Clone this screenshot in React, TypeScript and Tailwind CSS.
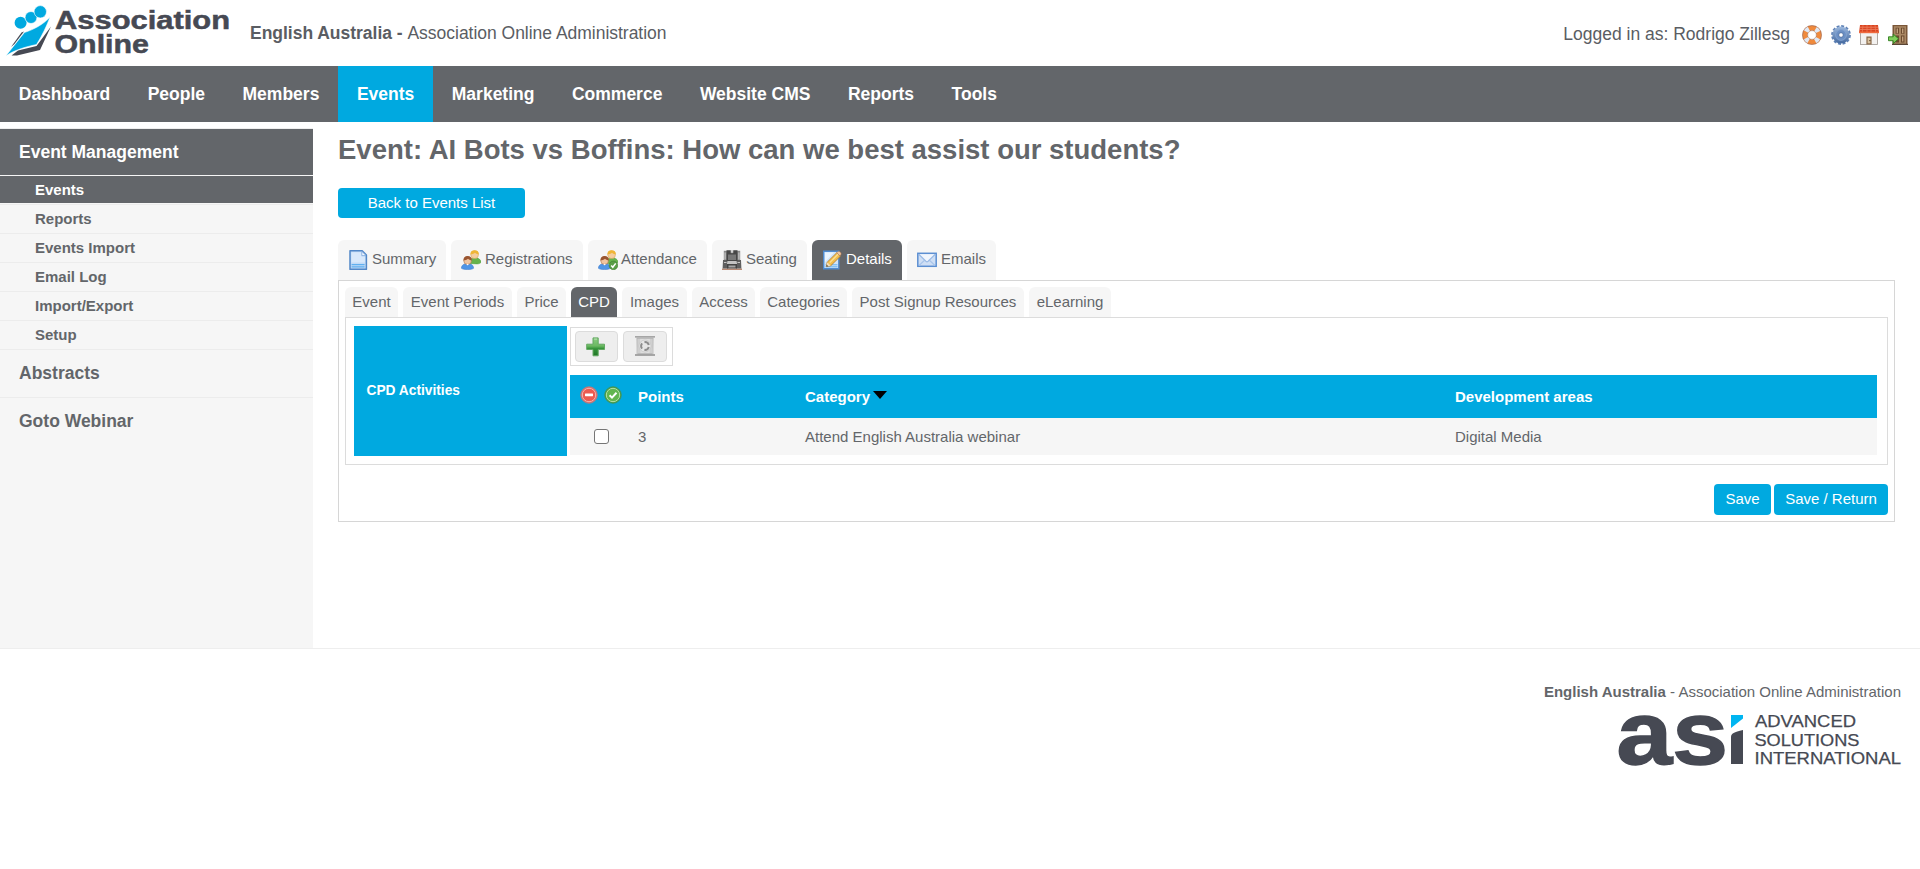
import React from "react";

const LifeRing = () => (
  <svg width="20" height="20" viewBox="0 0 20 20">
    <circle cx="10" cy="10" r="7" fill="none" stroke="#c96a2e" strokeWidth="5.6" />
    <circle cx="10" cy="10" r="7" fill="none" stroke="#f08a3c" strokeWidth="4.2" />
    <circle cx="10" cy="10" r="7" fill="none" stroke="#dfe8f5" strokeWidth="5.2" strokeDasharray="4 7" strokeDashoffset="-3.5" />
    <circle cx="10" cy="10" r="9.5" fill="none" stroke="#b08a78" strokeWidth=".6" />
    <circle cx="10" cy="10" r="4.3" fill="#fff" stroke="#b9a091" strokeWidth=".6" />
  </svg>
);

const Gear = () => (
  <svg width="20" height="20" viewBox="0 0 20 20">
    <defs>
      <linearGradient id="gear" x1="0" y1="0" x2="0" y2="1">
        <stop offset="0" stopColor="#9db9de" />
        <stop offset="1" stopColor="#44699f" />
      </linearGradient>
    </defs>
    <circle cx="10" cy="10" r="8.8" fill="none" stroke="#5f82b6" strokeWidth="2.2" strokeDasharray="2.9 1.7" />
    <circle cx="10" cy="10" r="8.6" fill="url(#gear)" />
    <circle cx="10" cy="10" r="5.4" fill="#6c90c4" stroke="#86a6d3" strokeWidth=".8" />
    <circle cx="10" cy="10" r="2.3" fill="#fff" stroke="#3c5f93" strokeWidth=".7" />
  </svg>
);

const Shop = () => (
  <svg width="20" height="20" viewBox="0 0 20 20">
    <rect x="1.5" y="7" width="17" height="12.5" fill="#f3f1ef" stroke="#9c948e" strokeWidth=".8" />
    <path d="M1 0h18l1 8H0z" fill="#d9431f" />
    <path d="M1 2.2h18M.6 4.4h18.8" stroke="#f6a184" strokeWidth=".6" />
    <path d="M4 0 3.3 7M8 0v7M12 0v7M16 0l.7 7" stroke="#f27d57" strokeWidth=".7" />
    <path d="M0 7.4h20" stroke="#f06a3e" strokeWidth="1.6" />
    <rect x="7.4" y="11.5" width="5.2" height="8" fill="#8a6b4c" />
    <rect x="8.6" y="12.8" width="2.8" height="5.5" fill="#d9c3a0" />
    <circle cx="10.9" cy="15.6" r=".7" fill="#4c3620" />
  </svg>
);

const Door = () => (
  <svg width="20" height="20" viewBox="0 0 20 20">
    <rect x="4.5" y="0" width="15" height="19.5" fill="#7a5638" />
    <rect x="6" y="1.2" width="12" height="17.6" fill="#a98763" />
    <path d="M7.6 2.8h3.4v6H7.6zM13 2.8h3.4v6H13zM7.6 10.4h3.4v7H7.6zM13 10.4h3.4v7H13z" fill="#6b492d" />
    <path d="M8.6 3.6h1.4v4.6H8.6zM14 3.6h1.4v4.6H14zM14 11.4h1.4v5H14z" fill="#c2a17c" />
    <path d="M4 19.4h16" stroke="#5a4636" strokeWidth="1.2" />
    <path d="M.5 11.8h4.7V9l5.4 4.8-5.4 4.8v-2.9H.5z" fill="#7fce5a" stroke="#2f7d1d" strokeWidth=".9" />
  </svg>
);

const PageIcon = () => (
  <svg width="20" height="20" viewBox="0 0 20 20">
    <path d="M2 .8h12.2l4.2 4.2v14.3H2z" fill="#c3dbf6" stroke="#5288c8" strokeWidth="1.5" strokeLinejoin="round" />
    <path d="M3.4 2.3h10v4.2h3.5v6H3.4z" fill="#d9e9fb" />
    <path d="M13.8 1.4v4.2H18z" fill="#f4f9ff" stroke="#7faade" strokeWidth=".8" />
    <path d="M3.6 14.6h13M3.6 16.9h13" stroke="#5fb0f0" strokeWidth="1.2" />
  </svg>
);

const PeopleIcon = ({ checked = false }: { checked?: boolean }) => (
  <svg width="20" height="20" viewBox="0 0 20 20">
    <path d="M8.500 13.500c-.3-4 2-5.700 5.500-5.700s6 2 6 4.300c0 1.200-2 1.800-4 1.800z" fill="#66b34c" stroke="#4d9a38" strokeWidth=".5" />
    <circle cx="13.600" cy="4.700" r="3.900" fill="#f4cd9e" stroke="#d5a050" strokeWidth=".5" />
    <path d="M9.400 4.600C9.200 1.500 11 .2 13.600.2s4.500 1.500 4.200 4.200C16 4.400 14.500 3.400 14 2.700 12.700 3.700 11 4.300 9.400 4.600z" fill="#efb536" />
    <path d="M.4 18.300c0-3.300 2.600-4.600 6.100-4.600s6.100 1.300 6.100 4.600c-2 1.700-10.200 1.700-12.200 0z" fill="#4f95e6" stroke="#3673c4" strokeWidth=".5" />
    <circle cx="6.600" cy="10.600" r="3.900" fill="#f0c5a0" stroke="#a0653c" strokeWidth=".5" />
    <path d="M2.500 10.600C2.200 7.500 4 5.900 6.600 5.900s4.500 1.500 4.200 4.500C9 10.400 7.600 9.400 7 8.700 5.800 9.700 4 10.300 2.500 10.600z" fill="#9a5530" />
    <path d="m5.300 14.100 1.300 1.400 1.300-1.400z" fill="#fff" />
    {checked && (
      <>
        <circle cx="15.400" cy="15.400" r="4.300" fill="#5a9e47" stroke="#3f7f32" strokeWidth=".6" />
        <path d="m13.200 15.500 1.600 1.800 2.900-3.900" fill="none" stroke="#fff" strokeWidth="1.500" />
      </>
    )}
  </svg>
);

const SeatIcon = () => (
  <svg width="20" height="20" viewBox="0 0 20 20">
    <path d="M0 18.500h20V20H0z" fill="#b98a74" />
    <path d="M1.800.8h16.400v10H1.800z" fill="#8a8a8a" />
    <path d="M1 10h5v8.500H.6zM14 10h5l.4 8.500H14z" fill="#5e5e5e" />
    <path d="M4.500.3h4.300v3h2.400v-3h4.300V11h-11z" fill="#474747" />
    <path d="M8.800.3h2.400v2.400H8.800z" fill="#d0d0d0" />
    <path d="M6 4.500h8V10H6z" fill="#777" />
    <path d="M5.500 11h9l.6 3H4.900z" fill="#c3c3c3" />
    <path d="M5 14h10v4.500H5z" fill="#444" />
    <path d="M6.500 15.500h7v2h-7z" fill="#a6a6a6" />
    <path d="M2.500 2.500h1.200v7H2.500zM16.300 2.500h1.200v7h-1.200zM2 12h2.500v1H2zM15.500 12H18v1h-2.500z" fill="#c5c5c5" />
  </svg>
);

const EditIcon = () => (
  <svg width="20" height="20" viewBox="0 0 20 20">
    <path d="M1.700 1.200h15.100v17.600H1.700z" fill="#cfe4fb" stroke="#4f8bd0" strokeWidth="1.400" />
    <path d="M3 2.500h9L3 12z" fill="#e9f4ff" />
    <path d="M3.500 14.800h12M3.500 16.800h12" stroke="#62b3f2" strokeWidth="1" />
    <path d="m5.200 12.200 9.600-9.500 3.600 3.500-9.600 9.500-4.500.9z" fill="#f2bf4f" stroke="#b0782a" strokeWidth=".8" />
    <path d="m7.800 12.600 8.400-8.400" stroke="#fbe3a0" strokeWidth="1.200" />
    <path d="m14.800 2.700.8-.8c.8-.7 2-.5 2.800.3s1 2 .3 2.700l-.8.900z" fill="#f0c9a4" stroke="#b77b52" strokeWidth=".6" />
    <path d="m5.200 12.200-.9 4.400 4.500-.9z" fill="#f4dcb4" />
    <path d="m4.700 14.700-.4 1.900 2-.4z" fill="#333" />
  </svg>
);

const MailIcon = () => (
  <svg width="20" height="20" viewBox="0 0 20 20">
    <rect x=".8" y="3.300" width="18.400" height="13" fill="#cfdff5" stroke="#5c8fd2" strokeWidth="1.500" />
    <path d="m2 4.200 8 8 8-8z" fill="#f1f6fd" />
    <path d="m2 15.500 5.600-5.200M18 15.500l-5.600-5.200" stroke="#a9c5ea" strokeWidth="1.200" />
    <path d="m1.800 4.300 7.100 7c.7.600 1.500.600 2.200 0l7.100-7" fill="none" stroke="#9bbbe6" strokeWidth="1.200" />
  </svg>
);

const PlusIcon = () => (
  <svg width="20" height="20" viewBox="0 0 20 20">
    <defs>
      <linearGradient id="plus" x1="0" y1="0" x2="0" y2="1">
        <stop offset="0" stopColor="#8acb80" />
        <stop offset=".45" stopColor="#6bb962" />
        <stop offset=".6" stopColor="#35933a" />
        <stop offset="1" stopColor="#1f7526" />
      </linearGradient>
    </defs>
    <path d="M7 .9h5.200v6.300h6.300v5.300h-6.300v6.300H7v-6.300H.7V7.200H7z" fill="url(#plus)" stroke="#63a862" strokeWidth="1" strokeLinejoin="round" />
    <path d="M8.100 2.100h3" stroke="#b9e2b4" strokeWidth="1" />
  </svg>
);

const BinIcon = () => (
  <svg width="20" height="20" viewBox="0 0 20 20">
    <path d="M1.500 1.500h17l-.9 17H2.400z" fill="#cfcfcf" />
    <path d="M5 1.500h10l-.5 17h-9z" fill="#dedede" />
    <path d="M0 .9h20M0 19h20" stroke="#8f8f8f" strokeWidth="1.400" />
    <path d="M2 2.500h16M2.500 17.500h15" stroke="#b5b5b5" strokeWidth=".8" />
    <path d="M2 2v16M18 2v16" stroke="#b8b8b8" strokeWidth=".8" />
    <circle cx="10" cy="10" r="6" fill="#e6e6e6" stroke="#c0c0c0" strokeWidth=".6" />
    <circle cx="10" cy="10" r="3.900" fill="none" stroke="#8c8c8c" strokeWidth="2" strokeDasharray="5.600 2.570" strokeDashoffset="-1" />
  </svg>
);

const NoneIcon = () => (
  <svg width="18" height="18" viewBox="0 0 18 18">
    <circle cx="9" cy="9" r="8.300" fill="#e0706b" stroke="#b9787e" strokeWidth=".8" />
    <circle cx="9" cy="9" r="6.700" fill="#ec5b50" stroke="#f5b0a9" strokeWidth="1" />
    <rect x="5" y="7.600" width="8" height="2.600" rx=".4" fill="#fff" />
  </svg>
);

const AllIcon = () => (
  <svg width="18" height="18" viewBox="0 0 18 18">
    <circle cx="9" cy="9" r="8.300" fill="#4ba03f" stroke="#3f9160" strokeWidth=".8" />
    <circle cx="9" cy="9" r="6.700" fill="#62b550" stroke="#b4dfa9" strokeWidth="1" />
    <path d="m5.600 9.200 2.400 2.400 4.500-4.800" fill="none" stroke="#fff" strokeWidth="2" />
  </svg>
);

const Logo = () => (
  <svg width="236" height="66" viewBox="0 0 236 66" className="shrink-0 overflow-visible">
    <path d="M21.500 32.500 24 31.500 14.500 44 11 47z" fill="#464953" />
    <path d="M51 26.500 40 50 17 55.500H11.500L18 50.500 36.500 46z" fill="#464953" />
    <path d="M6 55.700 24.500 32.500C34 29.500 43 24.500 50 17.300 46.500 26 42 36 36.500 44.500 27 46.500 15.500 49.500 6 55.700z" fill="#00a9e0" stroke="#fff" strokeWidth=".5" />
    <circle cx="20.600" cy="22.800" r="6" fill="#00a9e0" />
    <circle cx="31" cy="17.500" r="6" fill="#00a9e0" stroke="#fff" strokeWidth=".7" />
    <circle cx="40.300" cy="11.800" r="6.200" fill="#00a9e0" stroke="#fff" strokeWidth=".6" />
    <g fill="#464953" stroke="#464953" strokeWidth=".5" fontFamily="Liberation Sans, Arial, sans-serif" fontWeight="700" fontSize="25">
      <text x="55" y="29.300" textLength="175" lengthAdjust="spacingAndGlyphs">Association</text>
      <text x="54.500" y="52.800" textLength="94.500" lengthAdjust="spacingAndGlyphs">Online</text>
    </g>
  </svg>
);

const AsiLogo = () => (
  <svg width="283" height="52" viewBox="0 0 283 52" className="block overflow-visible">
    <g fill="#464953" fontFamily="Liberation Sans, Arial, sans-serif">
      <text x="-1.500" y="48.500" fontSize="89" fontWeight="700" stroke="#464953" strokeWidth="1.500" textLength="111.500" lengthAdjust="spacingAndGlyphs">as</text>
      <path d="M113 49V22c0-3.500 3-5 12-7v34z" />
      <path d="M113 0h12v3.500L113 13z" fill="#00b5f1" />
      <g fontSize="16.500" stroke="#464953" strokeWidth=".25">
        <text x="137" y="12.200" textLength="101" lengthAdjust="spacingAndGlyphs">ADVANCED</text>
        <text x="136.500" y="30.800" textLength="105" lengthAdjust="spacingAndGlyphs">SOLUTIONS</text>
        <text x="136.500" y="49.300" textLength="146.500" lengthAdjust="spacingAndGlyphs">INTERNATIONAL</text>
      </g>
    </g>
  </svg>
);

const navItems = ["Dashboard", "People", "Members", "Events", "Marketing", "Commerce", "Website CMS", "Reports", "Tools"];
const subItems = ["Reports", "Events Import", "Email Log", "Import/Export", "Setup"];

const tabs = [
  { label: "Summary", icon: <PageIcon />, width: "w-[108px]", gap: "gap-[4px]" },
  { label: "Registrations", icon: <PeopleIcon />, width: "w-[132px]", gap: "gap-[4px]" },
  { label: "Attendance", icon: <PeopleIcon checked />, width: "w-[119px]", gap: "gap-[3px]" },
  { label: "Seating", icon: <SeatIcon />, width: "w-[95px]", gap: "gap-[4px]" },
  { label: "Details", icon: <EditIcon />, width: "w-[90px]", gap: "gap-[4px]", active: true },
  { label: "Emails", icon: <MailIcon />, width: "w-[89px]", gap: "gap-[4px]" },
];

const subTabs = [
  { label: "Event", width: "w-[53px]" },
  { label: "Event Periods", width: "w-[109px]" },
  { label: "Price", width: "w-[49px]" },
  { label: "CPD", width: "w-[46px]", active: true },
  { label: "Images", width: "w-[65px]" },
  { label: "Access", width: "w-[63px]" },
  { label: "Categories", width: "w-[87px]" },
  { label: "Post Signup Resources", width: "w-[172px]" },
  { label: "eLearning", width: "w-[82px]" },
];

export default function App() {
  return (
    <div className="h-[869px] w-full overflow-hidden bg-white font-['Liberation_Sans',Arial,sans-serif] text-[15px] text-[#63666a]">
      <header className="flex h-[66px] items-center">
        <Logo />
        <div className="ml-[14px] text-[17.5px] tracking-[-0.02px] whitespace-pre text-[#5a5d63]">
          <b>English Australia - </b>Association Online Administration
        </div>
        <div className="mt-[3px] mr-[12px] ml-auto flex items-center">
          <span className="mr-[12px] text-[17.5px] text-[#5a5d63]">Logged in as: Rodrigo Zillesg</span>
          <div className="flex gap-[8.7px]">
            <LifeRing />
            <Gear />
            <Shop />
            <Door />
          </div>
        </div>
      </header>

      <nav className="flex h-[56px] bg-[#63666a] text-[17.5px] font-bold text-white">
        {navItems.map((n) => (
          <a key={n} className={n === "Events" ? "flex items-center bg-[#00a9e0] px-[18.75px]" : "flex items-center px-[18.75px]"}>
            {n}
          </a>
        ))}
      </nav>

      <div className="flex h-[526px]">
        <aside className="mt-[6px] w-[313px] shrink-0 border-t border-[#eee] bg-[#f6f6f6] font-bold">
          <div className="flex h-[46px] items-center bg-[#63666a] pl-[19px] text-[17.5px] text-white">Event Management</div>
          <div className="mt-px flex h-[27px] items-center bg-[#63666a] pt-px pl-[35px] text-white">Events</div>
          <div className="h-[2px] border-b border-[#ececec]" />
          {subItems.map((s) => (
            <div key={s} className="flex h-[29px] items-center border-b border-[#ececec] pl-[35px]">
              {s}
            </div>
          ))}
          <div className="flex h-[48px] items-center border-b border-[#ececec] pl-[19px] text-[17.5px]">Abstracts</div>
          <div className="flex h-[46px] items-center pl-[19px] text-[17.5px]">Goto Webinar</div>
        </aside>

        <main className="ml-[25px] w-[1557px]">
          <h1 className="mt-[12px] text-[27.5px] leading-[32px] font-bold">Event: AI Bots vs Boffins: How can we best assist our students?</h1>
          <button className="mt-[22px] flex h-[30px] w-[187px] items-center justify-center rounded-[4px] bg-[#00a9e0] text-white">Back to Events List</button>

          <div className="mt-[22px] flex gap-[5px]">
            {tabs.map((t) => (
              <div
                key={t.label}
                className={`flex h-[40px] items-center rounded-t-[6px] pl-[10px] ${t.gap} ${t.width} ${t.active ? "bg-[#63666a] text-white" : "bg-[#f6f6f6]"}`}
              >
                {t.icon}
                <span className="-mt-px">{t.label}</span>
              </div>
            ))}
          </div>

          <section className="h-[242px] border border-[#d6d6d6] px-[6px] pt-[6px]">
            <div className="flex gap-[5px]">
              {subTabs.map((t) => (
                <div
                  key={t.label}
                  className={`flex h-[30px] items-center justify-center rounded-t-[6px] whitespace-nowrap ${t.width} ${t.active ? "bg-[#63666a] text-white" : "bg-[#f6f6f6]"}`}
                >
                  {t.label}
                </div>
              ))}
            </div>
            <div className="flex h-[148px] gap-[3px] border border-[#dcdcdc] pt-[8px] pr-[10px] pl-[8px]">
              <div className="flex h-[130px] w-[213px] shrink-0 items-center bg-[#00a9e0] pl-[12.5px] text-[13.75px] font-bold text-white">CPD Activities</div>
              <div className="flex-1">
                <div className="mt-px flex h-[39px] w-[103px] gap-[5px] border border-[#dcdcdc] pt-[3px] pl-[4px]">
                  <button className="flex h-[31px] w-[43px] items-center justify-center rounded-[4px] border border-[#dcdcdc] bg-[#eee] pr-[2px]">
                    <PlusIcon />
                  </button>
                  <button className="flex h-[31px] w-[44px] items-center justify-center rounded-[4px] border border-[#dcdcdc] bg-[#eee] pb-px">
                    <BinIcon />
                  </button>
                </div>
                <div className="mt-[9px] grid h-[43px] grid-cols-[68px_167px_650px_1fr] items-center bg-[#00a9e0] pt-px font-bold text-white">
                  <div className="-mt-[4px] flex gap-[6px] pl-[10px]">
                    <NoneIcon />
                    <AllIcon />
                  </div>
                  <div>Points</div>
                  <div className="flex items-center gap-[3px]">
                    Category
                    <svg width="14" height="8" viewBox="0 0 14 8" className="-mt-[4px]">
                      <path d="M0 0h14L7 8z" fill="#000" />
                    </svg>
                  </div>
                  <div>Development areas</div>
                </div>
                <div className="grid h-[37px] grid-cols-[68px_167px_650px_1fr] items-center bg-[#f6f6f6] pt-px">
                  <div className="-mt-px ml-[24px] h-[15px] w-[15px] rounded-[3px] border border-[#767676] bg-white" />
                  <div>3</div>
                  <div>Attend English Australia webinar</div>
                  <div>Digital Media</div>
                </div>
              </div>
            </div>
            <div className="mt-[19px] flex justify-end gap-[3px] text-white">
              <button className="h-[31px] w-[57px] rounded-[4px] bg-[#00a9e0]">Save</button>
              <button className="h-[31px] w-[114px] rounded-[4px] bg-[#00a9e0]">Save / Return</button>
            </div>
          </section>
        </main>
      </div>

      <footer className="flex flex-col items-end border-t border-[#eee] pt-[33px] pr-[19px]">
        <div className="leading-[20px]">
          <b>English Australia</b> - Association Online Administration
        </div>
        <div className="mt-[13px]">
          <AsiLogo />
        </div>
      </footer>
    </div>
  );
}
